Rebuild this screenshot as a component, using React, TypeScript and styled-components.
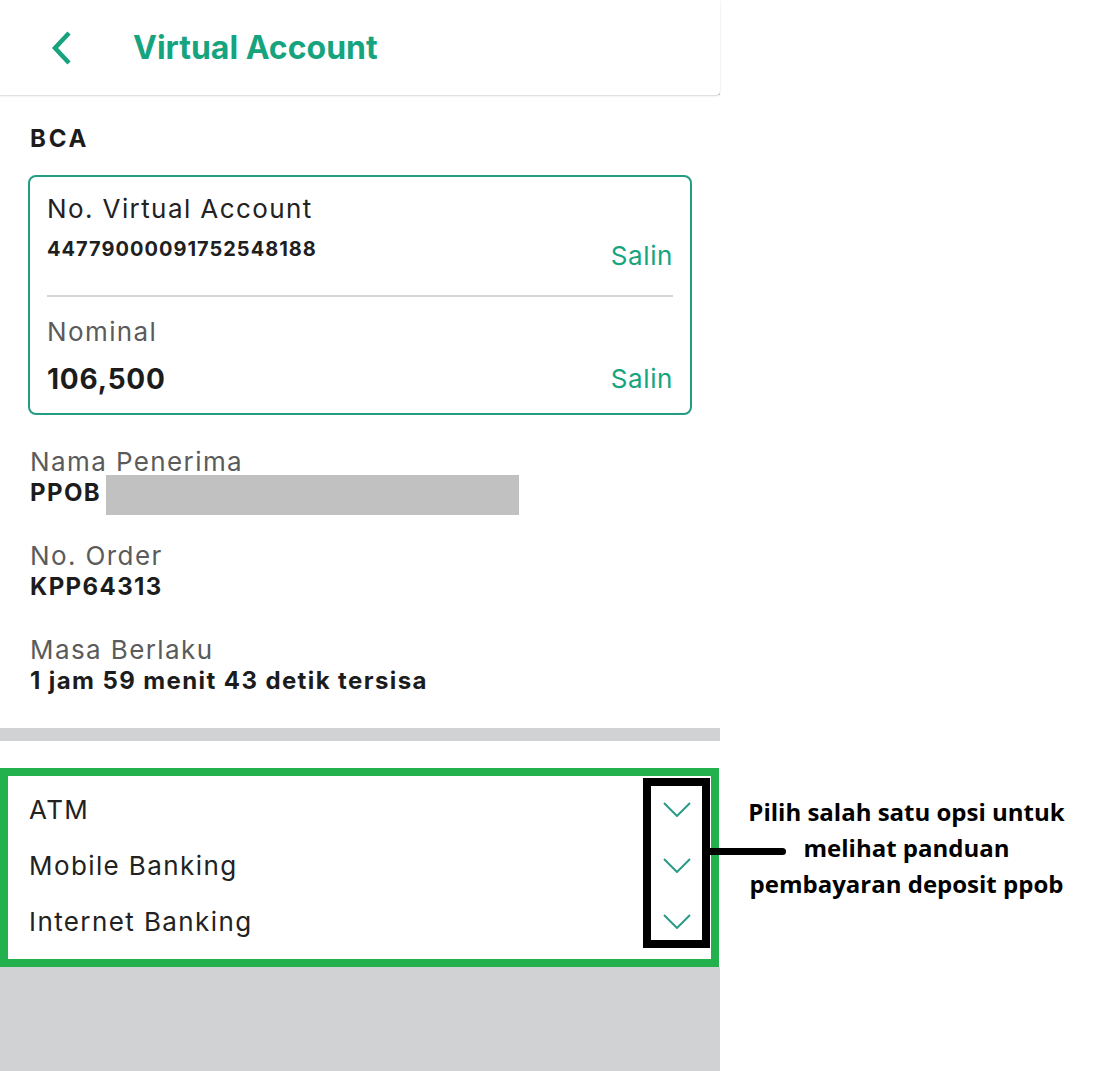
import React from 'react';
import styled, { createGlobalStyle } from 'styled-components';

const GlobalStyle = createGlobalStyle`
  * { box-sizing: border-box; }
  body {
    margin: 0;
    background: #ffffff;
    font-family: Inter, Roboto, "Noto Sans", sans-serif;
  }
`;

const Page = styled.div`
  display: flex;
  width: 1099px;
  min-height: 1071px;
`;

const Screen = styled.div`
  width: 720px;
  min-height: 1071px;
  background: #d1d2d4;
  display: flex;
  flex-direction: column;
`;

const Header = styled.header`
  height: 95px;
  background: #ffffff;
  display: flex;
  align-items: center;
  padding-left: 50px;
  border-bottom-right-radius: 4px;
  box-shadow: 0 1px 2px rgba(0, 0, 0, 0.16);
  position: relative;
  z-index: 1;
`;

const Title = styled.h1`
  margin: 0 0 0 59px;
  font-size: 32px;
  font-weight: 700;
  color: #16a47f;
`;

const Details = styled.section`
  background: #ffffff;
  padding: 29px 28px 31px;
`;

const BankName = styled.div`
  font-size: 24px;
  line-height: 30px;
  font-weight: 700;
  letter-spacing: 2.8px;
  color: #1c1c1c;
  padding-left: 2px;
`;

const Card = styled.div`
  margin-top: 21px;
  border: 2px solid #239c84;
  border-radius: 8px;
  padding: 17px 17px 19px;
`;

const CardRow = styled.div`
  display: flex;
  justify-content: space-between;
  align-items: flex-end;
`;

const Stack = styled.div`
  display: flex;
  flex-direction: column;
`;

const CardLabel = styled.div<{ $muted?: boolean }>`
  font-size: 26px;
  line-height: 30px;
  letter-spacing: 1.4px;
  color: ${(p) => (p.$muted ? '#5b5b5b' : '#222222')};
`;

const AccountNumber = styled.div`
  margin-top: 10px;
  font-size: 20px;
  line-height: 30px;
  font-weight: 700;
  letter-spacing: 1px;
  color: #1f1f1f;
`;

const Amount = styled.div`
  margin-top: 17px;
  font-size: 28px;
  line-height: 30px;
  font-weight: 700;
  letter-spacing: 0.8px;
  color: #1c1c1c;
`;

const CopyButton = styled.button<{ $drop?: number }>`
  border: none;
  background: none;
  padding: 0;
  font-family: inherit;
  font-size: 26px;
  line-height: 30px;
  letter-spacing: 0.6px;
  color: #16a47f;
  margin-bottom: ${(p) => -(p.$drop ?? 0)}px;
`;

const Divider = styled.hr`
  margin: 31px 0 20px;
  border: none;
  border-top: 2px solid #d6d6d6;
`;

const Field = styled.div`
  margin-top: 32px;
`;

const FieldLabel = styled.div`
  font-size: 26px;
  line-height: 30px;
  letter-spacing: 1.4px;
  color: #5b5b5b;
  padding-left: 2px;
`;

const FieldValue = styled.div`
  display: flex;
  align-items: flex-start;
  font-size: 24px;
  line-height: 32px;
  font-weight: 700;
  letter-spacing: 1.4px;
  color: #1c1c1c;
  padding-left: 2px;
`;

const Redacted = styled.span`
  width: 413px;
  height: 40px;
  margin: -2px 0 -6px 5px;
  background: #c1c1c1;
`;

const Guides = styled.section`
  margin-top: 13px;
  background: #ffffff;
  padding-top: 27px;
`;

const Highlight = styled.div`
  position: relative;
  width: 719px;
  border: 8px solid #22b14c;
  padding: 5px 0 10px;
`;

const GuideRow = styled.div`
  height: 56px;
  display: flex;
  align-items: center;
  justify-content: space-between;
  padding: 0 20px 0 21px;
  font-size: 26px;
  letter-spacing: 1.4px;
  color: #222222;
`;

const Marker = styled.div`
  position: absolute;
  top: 2px;
  right: 1px;
  width: 67px;
  height: 170px;
  border: 8px solid #000000;
`;

const Connector = styled.div`
  position: absolute;
  left: 59px;
  top: 62px;
  width: 76px;
  height: 7px;
  background: #000000;
  border-radius: 0 4px 4px 0;
`;

const Aside = styled.aside`
  flex: 1;
  padding: 794px 6px 0 0;
  text-align: center;
  font-family: "Open Sans", "Noto Sans", sans-serif;
  font-size: 24px;
  line-height: 36px;
  font-weight: 700;
  color: #000000;
`;

const BackIcon = () => (
  <svg width="24" height="36" viewBox="0 0 24 36" fill="none">
    <polyline points="19,3 5,18 19,33" stroke="#16a47f" strokeWidth="4.5" />
  </svg>
);

const ChevronDown = () => (
  <svg width="28" height="15" viewBox="0 0 28 15" fill="none">
    <polyline points="1,1 14,14 27,1" stroke="#2a9c88" strokeWidth="2" />
  </svg>
);

const guides = ['ATM', 'Mobile Banking', 'Internet Banking'];

const App = () => {
  return (
    <>
      <GlobalStyle />
      <Page>
        <Screen>
          <Header>
            <BackIcon />
            <Title>Virtual Account</Title>
          </Header>
          <Details>
            <BankName>BCA</BankName>
            <Card>
              <CardRow>
                <Stack>
                  <CardLabel>No. Virtual Account</CardLabel>
                  <AccountNumber>447790000917525481​88</AccountNumber>
                </Stack>
                <CopyButton $drop={7}>Salin</CopyButton>
              </CardRow>
              <Divider />
              <CardRow>
                <Stack>
                  <CardLabel $muted>Nominal</CardLabel>
                  <Amount>106,500</Amount>
                </Stack>
                <CopyButton>Salin</CopyButton>
              </CardRow>
            </Card>
            <Field>
              <FieldLabel>Nama Penerima</FieldLabel>
              <FieldValue>
                PPOB
                <Redacted />
              </FieldValue>
            </Field>
            <Field>
              <FieldLabel>No. Order</FieldLabel>
              <FieldValue>KPP64313</FieldValue>
            </Field>
            <Field>
              <FieldLabel>Masa Berlaku</FieldLabel>
              <FieldValue>1 jam 59 menit 43 detik tersisa</FieldValue>
            </Field>
          </Details>
          <Guides>
            <Highlight>
              {guides.map((g) => (
                <GuideRow key={g}>
                  {g}
                  <ChevronDown />
                </GuideRow>
              ))}
              <Marker>
                <Connector />
              </Marker>
            </Highlight>
          </Guides>
        </Screen>
        <Aside>
          Pilih salah satu opsi untuk
          <br />
          melihat panduan
          <br />
          pembayaran deposit ppob
        </Aside>
      </Page>
    </>
  );
};

export default App;
